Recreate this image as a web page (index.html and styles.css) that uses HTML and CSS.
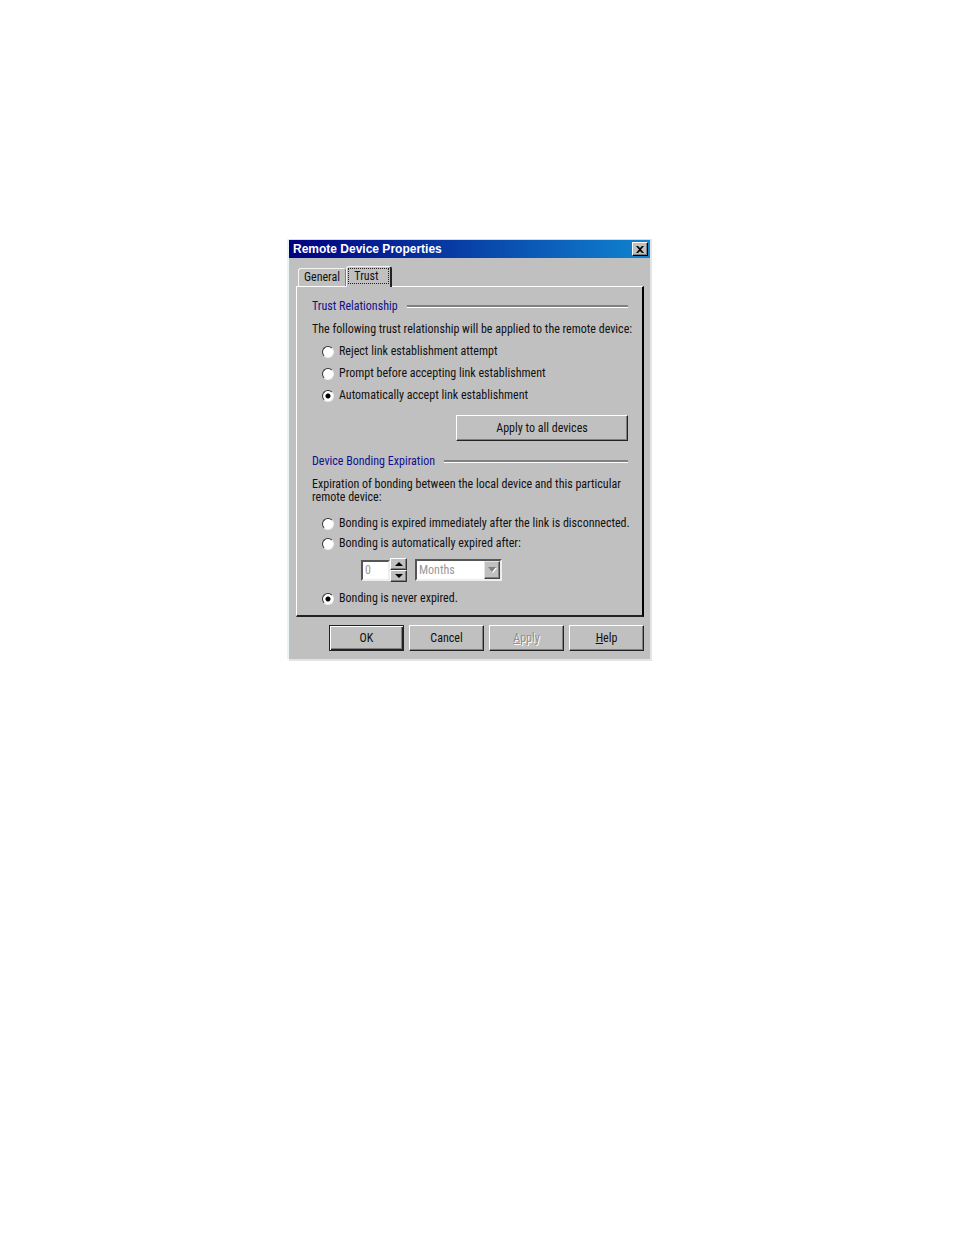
FILE: index.html
```
<!DOCTYPE html>
<html lang="en">
  <head>
    <meta charset="UTF-8" />
    <meta name="viewport" content="width=device-width, initial-scale=1.0" />
    <title>Remote Device Properties</title>
    <link rel="stylesheet" href="styles.css">
  </head>
  <body>
    <form class="dialog">
      <div class="titlebar">
        <h1>Remote Device Properties</h1>
        <button type="button" class="close" aria-label="Close">
          <svg width="8" height="7" viewBox="0 0 8 7">
            <path d="M0 0h2l2 2 2-2h2L5 3.500 8 7H6L4 5 2 7H0l3-3.500z" />
          </svg>
        </button>
      </div>

      <div class="tabs">
        <button type="button" class="tab">General</button>
        <button type="button" class="tab active"><span>Trust</span></button>
      </div>

      <div class="panel">
        <h2>Trust Relationship</h2>
        <p>The following trust relationship will be applied to the remote device:</p>
        <div class="options">
          <label><input type="radio" name="trust" /> Reject link establishment attempt</label>
          <label><input type="radio" name="trust" /> Prompt before accepting link establishment</label>
          <label><input type="radio" name="trust" checked /> Automatically accept link establishment</label>
        </div>
        <button type="button" class="btn apply-all">Apply to all devices</button>

        <h2>Device Bonding Expiration</h2>
        <p>Expiration of bonding between the local device and this particular<br />remote device:</p>
        <div class="options bonding">
          <label><input type="radio" name="bonding" /> Bonding is expired immediately after the link is disconnected.</label>
          <label><input type="radio" name="bonding" /> Bonding is automatically expired after:</label>
          <div class="period">
            <input type="text" class="amount" value="0" aria-label="Amount" disabled />
            <div class="spinner">
              <button type="button" aria-label="Increase">
                <svg width="8" height="4" viewBox="0 0 8 4"><path d="M4 0l4 4H0z" /></svg>
              </button>
              <button type="button" aria-label="Decrease">
                <svg width="8" height="4" viewBox="0 0 8 4"><path d="M0 0h8L4 4z" /></svg>
              </button>
            </div>
            <div class="unit">
              <select aria-label="Unit" disabled>
                <option>Months</option>
              </select>
              <span class="arrow">
                <svg width="9" height="6" viewBox="0 0 9 6">
                  <path d="M1 1h8L5 6z" fill="#fff" />
                  <path d="M0 0h8L4 5z" fill="#808080" />
                </svg>
              </span>
            </div>
          </div>
          <label><input type="radio" name="bonding" checked /> Bonding is never expired.</label>
        </div>
      </div>

      <div class="btn-row">
        <button type="button" class="btn default">OK</button>
        <button type="button" class="btn">Cancel</button>
        <button type="button" class="btn" disabled><u>A</u>pply</button>
        <button type="button" class="btn"><u>H</u>elp</button>
      </div>
    </form>
  </body>
</html>
```
FILE: styles.css
```
* {
  box-sizing: border-box;
  margin: 0;
  padding: 0;
}
body {
  background: #fff;
  color: #111;
  font-family: "Roboto Condensed", "Noto Sans CJK SC", sans-serif;
  font-size: 12px;
  line-height: 13px;
  padding: 239px 15px 16px 0;
}
button,
input,
select {
  font: inherit;
  color: inherit;
}
svg {
  display: block;
}
.dialog {
  width: 100%;
  max-width: 361px;
  margin: 0 auto;
  padding-bottom: 8px;
  background: #c0c0c0;
  border-top: 1px solid #d8dce0;
  box-shadow: 1px 1px 0 1px #e4e4e4, -2px 0 0 #e6f6f6;
}
.titlebar {
  display: flex;
  align-items: center;
  justify-content: space-between;
  height: 18px;
  padding: 0 2px 0 4px;
  background: linear-gradient(to right, #000080, #1084d0);
  color: #fff;
}
h1 {
  font-family: "Liberation Sans", Arial, sans-serif;
  font-size: 12px;
  font-weight: bold;
}
.close {
  display: flex;
  align-items: center;
  justify-content: center;
  width: 16px;
  height: 14px;
  background: #c0c0c0;
  border: 1px solid;
  border-color: #fff #000 #000 #fff;
  box-shadow: inset -1px -1px 0 #808080;
}
.tabs {
  display: flex;
  align-items: flex-end;
  height: 28px;
  padding-left: 9px;
}
.tab {
  height: 18px;
  width: 48px;
  background: #c0c0c0;
  border: 1px solid #f4f4f4;
  border-bottom: 0;
  border-right-color: #808080;
  border-radius: 3px 3px 0 0;
}
.tab.active {
  height: 21px;
  width: 46px;
  padding: 1px 1px 3px;
  margin-bottom: -1px;
  border-right: 2px solid #222;
  z-index: 1;
}
.tab.active span {
  display: block;
  padding-right: 4px;
  border: 1px dotted #222;
  line-height: 14px;
}
.panel {
  margin: 0 6px 0 7px;
  padding: 13px 14px 10px 15px;
  border: 1px solid #fff;
  border-right: 2px solid #000;
  border-bottom: 2px solid #222;
}
.panel p {
  white-space: nowrap;
}
h2 {
  display: flex;
  align-items: center;
  gap: 9px;
  margin-bottom: 10px;
  color: #10108c;
  font-size: 12px;
  font-weight: normal;
}
h2::after {
  content: "";
  flex: 1;
  height: 2px;
  background: #808080;
  border-bottom: 1px solid #fff;
}
.options {
  display: flex;
  flex-direction: column;
  gap: 9px;
  padding: 9px 0 0 10px;
}
.options label {
  display: flex;
  align-items: center;
  gap: 5px;
  white-space: nowrap;
}
.options input[type="radio"] {
  appearance: none;
  flex-shrink: 0;
  width: 12px;
  height: 12px;
  background: #fff;
  border: 1px solid;
  border-color: #333 #eee #eee #333;
  border-radius: 50%;
}
.options input[type="radio"]:checked {
  background: radial-gradient(circle, #000 2px, #fff 3px);
}
.btn {
  height: 26px;
  background: #c0c0c0;
  border: 1px solid;
  border-color: #fff #222 #222 #fff;
  box-shadow: inset -1px -1px 0 #808080;
}
.btn:disabled {
  color: #909090;
  text-shadow: 1px 1px 0 #fff;
}
.btn.default {
  border-color: #222;
  box-shadow: inset 1px 1px 0 #fff, inset -1px -1px 0 #222, inset -2px -2px 0 #808080;
}
.apply-all {
  display: block;
  width: 172px;
  margin: 13px 0 14px auto;
}
.bonding {
  gap: 7px;
  padding-top: 13px;
}
.period {
  display: flex;
  align-items: center;
  padding-left: 39px;
  margin: 1px 0 3px;
  color: #999;
}
.amount {
  width: 29px;
  height: 21px;
  padding: 0 2px;
  background: #fff;
  border: 2px solid;
  border-color: #555 #eee #eee #555;
}
.spinner {
  display: grid;
  width: 17px;
  margin-right: 8px;
}
.spinner button {
  display: flex;
  align-items: center;
  justify-content: center;
  height: 12px;
  background: #c0c0c0;
  border: 1px solid;
  border-color: #fff #333 #333 #fff;
  box-shadow: inset -1px -1px 0 #808080;
}
.unit {
  position: relative;
  width: 87px;
}
.unit select {
  display: block;
  appearance: none;
  width: 100%;
  height: 22px;
  padding: 0 18px 0 2px;
  background: #fff;
  border: 2px solid;
  border-color: #555 #eee #eee #555;
  border-radius: 0;
  opacity: 1;
}
.arrow {
  position: absolute;
  top: 2px;
  right: 2px;
  bottom: 2px;
  display: flex;
  align-items: center;
  justify-content: center;
  width: 16px;
  background: #c0c0c0;
  border: 1px solid;
  border-color: #e4e4e4 #444 #444 #e4e4e4;
  box-shadow: inset -1px -1px 0 #808080;
  pointer-events: none;
}
.btn-row {
  display: flex;
  justify-content: flex-end;
  gap: 5px;
  margin: 8px 6px 0;
}
.btn-row .btn {
  width: 75px;
}
```
